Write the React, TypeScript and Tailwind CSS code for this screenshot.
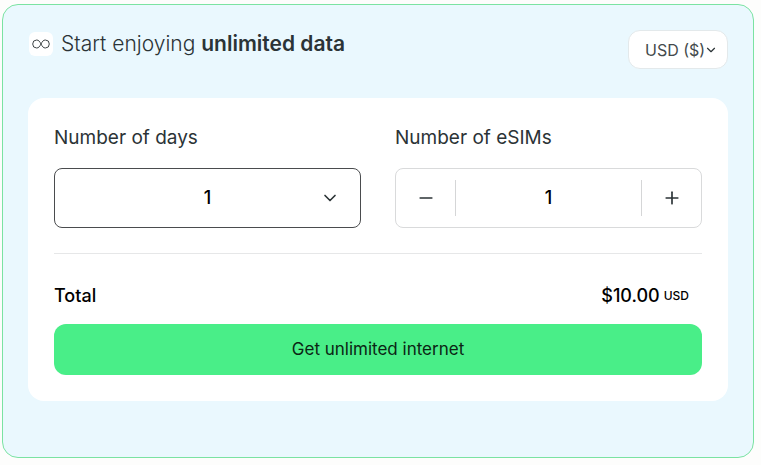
import { useState } from "react";
import { ChevronDown, Minus, Plus } from "lucide-react";

const PRICE_PER_DAY = 10;

export default function App() {
  const [days, setDays] = useState(1);
  const [esims, setEsims] = useState(1);
  const [currency, setCurrency] = useState("USD");

  const total = (days * esims * PRICE_PER_DAY).toFixed(2);

  return (
    <div className="min-h-screen bg-[#fdfdfc] pt-1 pr-[7px] pb-[7px] pl-0.5 font-['Inter',sans-serif] text-[#2b3336]">
      <main className="rounded-2xl border border-[#7be3a2] bg-[#eaf8fe] px-[25px] pt-[25px] pb-14">
        <header className="flex items-start justify-between">
          <div className="flex items-center gap-2 pl-px">
            <span className="flex size-6 items-center justify-center rounded-md bg-white">
              <svg
                viewBox="0 0 18 10"
                className="h-[10px] w-[18px]"
                fill="none"
                stroke="#3f4547"
                strokeWidth="1"
                aria-hidden="true"
              >
                <path d="M9 5C7.8 2.600 6.700 1 4.700 1a4 4 0 0 0 0 8C6.700 9 7.800 7.400 9 5s2.300-4 4.300-4a4 4 0 0 1 0 8C11.300 9 10.200 7.400 9 5z" />
              </svg>
            </span>
            <h1 className="text-[21px] leading-7 font-light">
              Start enjoying <strong className="font-semibold">unlimited data</strong>
            </h1>
          </div>
          <div className="relative">
            <select
              aria-label="Currency"
              value={currency}
              onChange={(e) => setCurrency(e.target.value)}
              className="h-[39px] w-[100px] appearance-none rounded-xl border border-[#e3e9eb] bg-white pl-4 text-base text-[#444a4c]"
            >
              <option value="USD">USD ($)</option>
              <option value="EUR">EUR (€)</option>
            </select>
            <ChevronDown
              className="pointer-events-none absolute top-[13px] right-[10px] size-[14px]"
              strokeWidth={2}
            />
          </div>
        </header>

        <section className="mt-[29px] rounded-2xl bg-white p-[26px]">
          <div className="grid grid-cols-2 gap-[34px]">
            <div>
              <label htmlFor="days" className="block text-[19px] leading-7">
                Number of days
              </label>
              <div className="relative mt-4">
                <select
                  id="days"
                  value={days}
                  onChange={(e) => setDays(Number(e.target.value))}
                  className="block h-[60px] w-full appearance-none rounded-lg border border-[#4a4c4e] bg-white text-lg font-medium text-black [text-align-last:center]"
                >
                  <option value={1}>1</option>
                  <option value={3}>3</option>
                  <option value={7}>7</option>
                </select>
                <ChevronDown
                  className="pointer-events-none absolute top-5 right-[21px] size-5"
                  strokeWidth={2}
                />
              </div>
            </div>

            <div>
              <label htmlFor="esims" className="block text-[19px] leading-7">
                Number of eSIMs
              </label>
              <div className="mt-4 flex h-[60px] items-center rounded-lg border border-[#d9dadb]">
                <button
                  type="button"
                  aria-label="Remove one eSIM"
                  onClick={() => setEsims(Math.max(1, esims - 1))}
                  className="flex h-9 w-[60px] shrink-0 items-center justify-center border-r border-[#d5d6d7]"
                >
                  <Minus className="size-5" strokeWidth={2} />
                </button>
                <input
                  id="esims"
                  type="text"
                  inputMode="numeric"
                  value={esims}
                  onChange={(e) => setEsims(Number(e.target.value) || 1)}
                  className="min-w-0 flex-1 text-center text-lg font-medium text-black"
                />
                <button
                  type="button"
                  aria-label="Add one eSIM"
                  onClick={() => setEsims(esims + 1)}
                  className="flex h-9 w-[60px] shrink-0 items-center justify-center border-l border-[#d5d6d7]"
                >
                  <Plus className="size-5" strokeWidth={2} />
                </button>
              </div>
            </div>
          </div>

          <hr className="mt-[25px] border-[#e6e7e8]" />

          <div className="mt-7 flex items-center justify-between pr-[13px] text-lg leading-7 font-medium text-black">
            <span>Total</span>
            <span className="flex items-center gap-1">
              ${total} <span className="text-xs">{currency}</span>
            </span>
          </div>
          <button
            type="button"
            className="mt-[14px] h-[51px] w-full rounded-xl bg-[#49ee88] text-[17px] text-[#0b2514]"
          >
            Get unlimited internet
          </button>
        </section>
      </main>
    </div>
  );
}
